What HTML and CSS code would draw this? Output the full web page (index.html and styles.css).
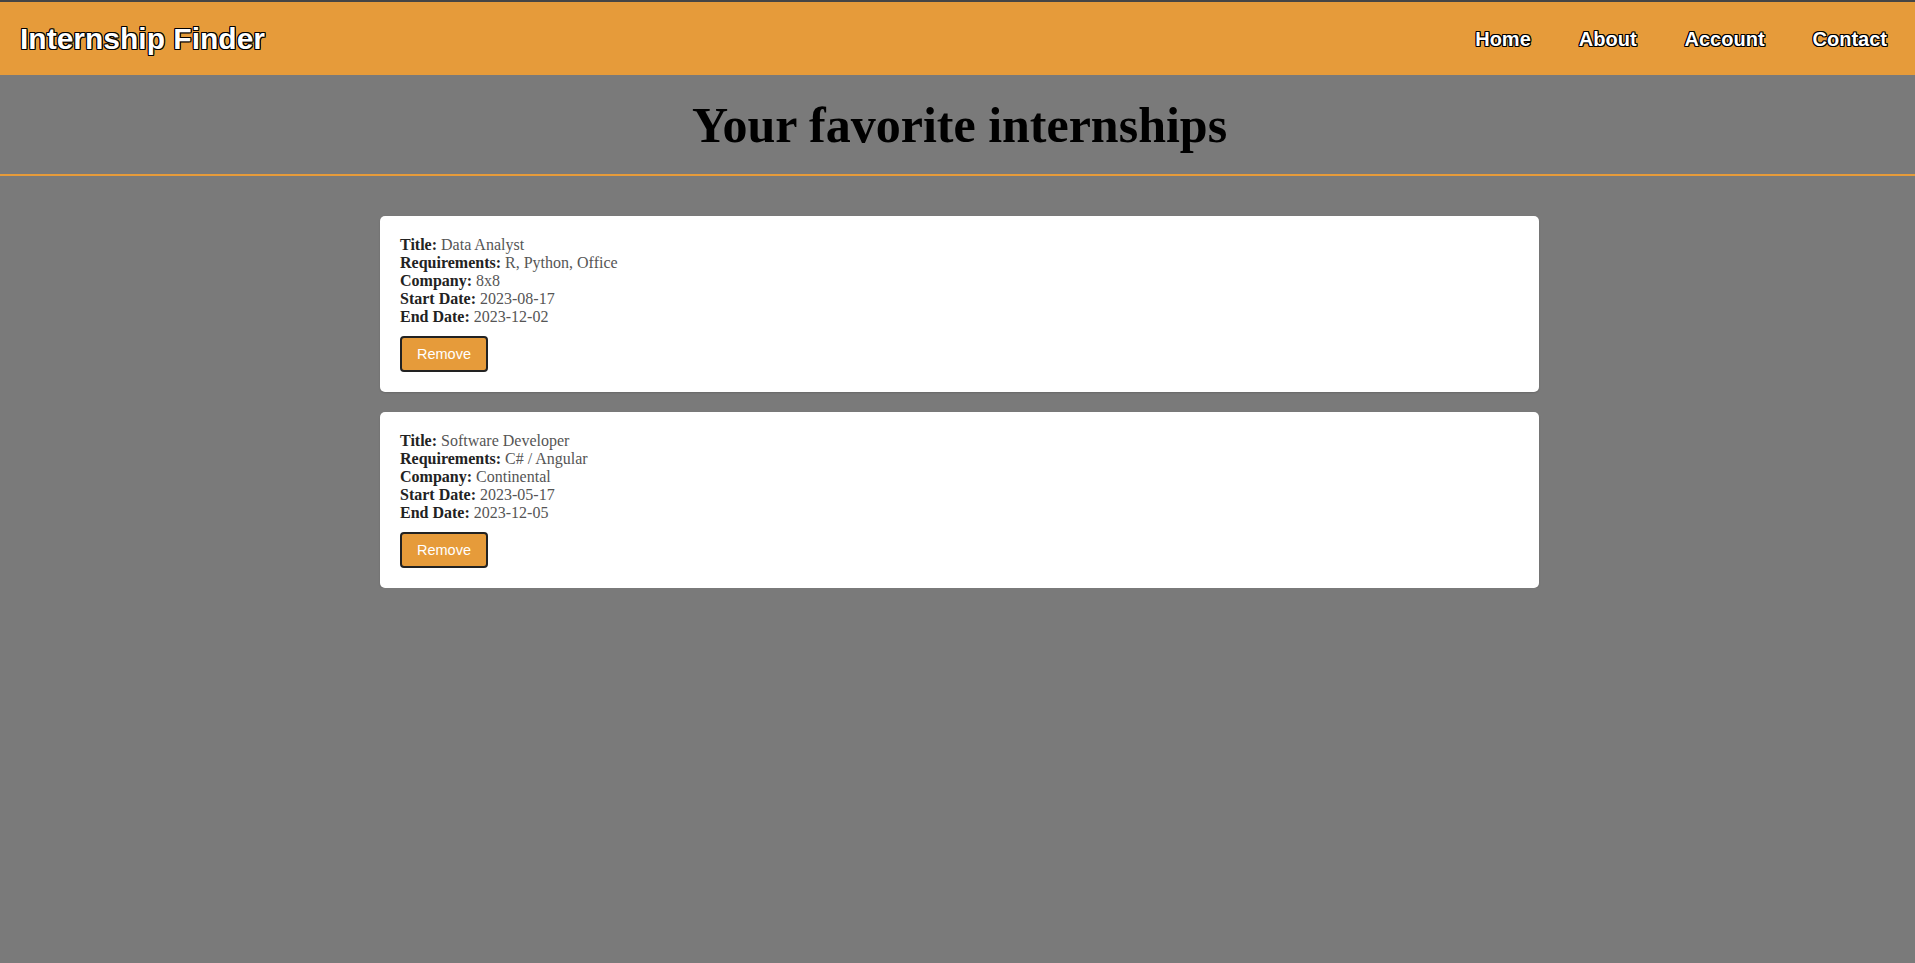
FILE: index.html
```
<!DOCTYPE html>
<html lang="en">
<head>
<meta charset="utf-8">
<title>Internship Finder</title>
<link rel="stylesheet" href="styles.css">
</head>
<body>
<header class="topbar">
  <div class="brand">Internship Finder</div>
  <nav class="nav">
    <a href="#">Home</a>
    <a href="#">About</a>
    <a href="#">Account</a>
    <a href="#">Contact</a>
  </nav>
</header>
<section class="page-head">
  <h1>Your favorite internships</h1>
</section>
<main class="list">
  <article class="card">
    <div class="info">
      <div><b>Title:</b> <span>Data Analyst</span></div>
      <div><b>Requirements:</b> <span>R, Python, Office</span></div>
      <div><b>Company:</b> <span>8x8</span></div>
      <div><b>Start Date:</b> <span>2023-08-17</span></div>
      <div><b>End Date:</b> <span>2023-12-02</span></div>
    </div>
    <button class="remove">Remove</button>
  </article>
  <article class="card">
    <div class="info">
      <div><b>Title:</b> <span>Software Developer</span></div>
      <div><b>Requirements:</b> <span>C# / Angular</span></div>
      <div><b>Company:</b> <span>Continental</span></div>
      <div><b>Start Date:</b> <span>2023-05-17</span></div>
      <div><b>End Date:</b> <span>2023-12-05</span></div>
    </div>
    <button class="remove">Remove</button>
  </article>
</main>
</body>
</html>
```
FILE: styles.css
```
* { box-sizing: border-box; }
html, body {
  margin: 0;
  padding: 0;
  background: #7a7a7a;
  min-height: 100%;
}
body {
  font-family: "Liberation Serif", "Times New Roman", serif;
}
.topbar {
  height: 75px;
  border-top: 2px solid #454545;
  background: #e69b3a;
  display: flex;
  align-items: center;
  justify-content: space-between;
  padding: 0 28px 0 20px;
}
.brand, .nav a {
  font-family: "Liberation Sans", Arial, sans-serif;
  font-weight: bold;
  color: #fff;
  text-shadow: -1px -1px 0 #000, 1px -1px 0 #000, -1px 1px 0 #000, 1px 1px 0 #000, 0 1px 0 #000, 0 -1px 0 #000, 1px 0 0 #000, -1px 0 0 #000;
}
.brand {
  font-size: 30px;
  margin-top: 1px;
}
.nav {
  display: flex;
  gap: 48px;
  margin-top: 1px;
}
.nav a {
  font-size: 20px;
  text-decoration: none;
}
.page-head {
  border-bottom: 2px solid #e69b3a;
  padding: 21px 0 20px;
  text-align: center;
}
.page-head h1 {
  margin: 0 0 0 4px;
  font-size: 50px;
  font-weight: bold;
  color: #000;
}
.list {
  padding-top: 40px;
  display: flex;
  flex-direction: column;
  align-items: center;
  gap: 20px;
}
.card {
  width: 1159px;
  margin-left: 4px;
  background: #fff;
  border-radius: 5px;
  padding: 20px;
  box-shadow: 0 1px 2px rgba(0,0,0,0.15);
}
.info {
  font-size: 16px;
  color: #555;
}
.info b {
  color: #222;
}
.remove {
  display: block;
  margin-top: 10px;
  width: 88px;
  height: 36px;
  background: #e69b3a;
  border: 2px solid #222;
  border-radius: 4px;
  color: #fff;
  font-family: "Liberation Sans", Arial, sans-serif;
  font-size: 14.5px;
  padding: 0;
}
```
